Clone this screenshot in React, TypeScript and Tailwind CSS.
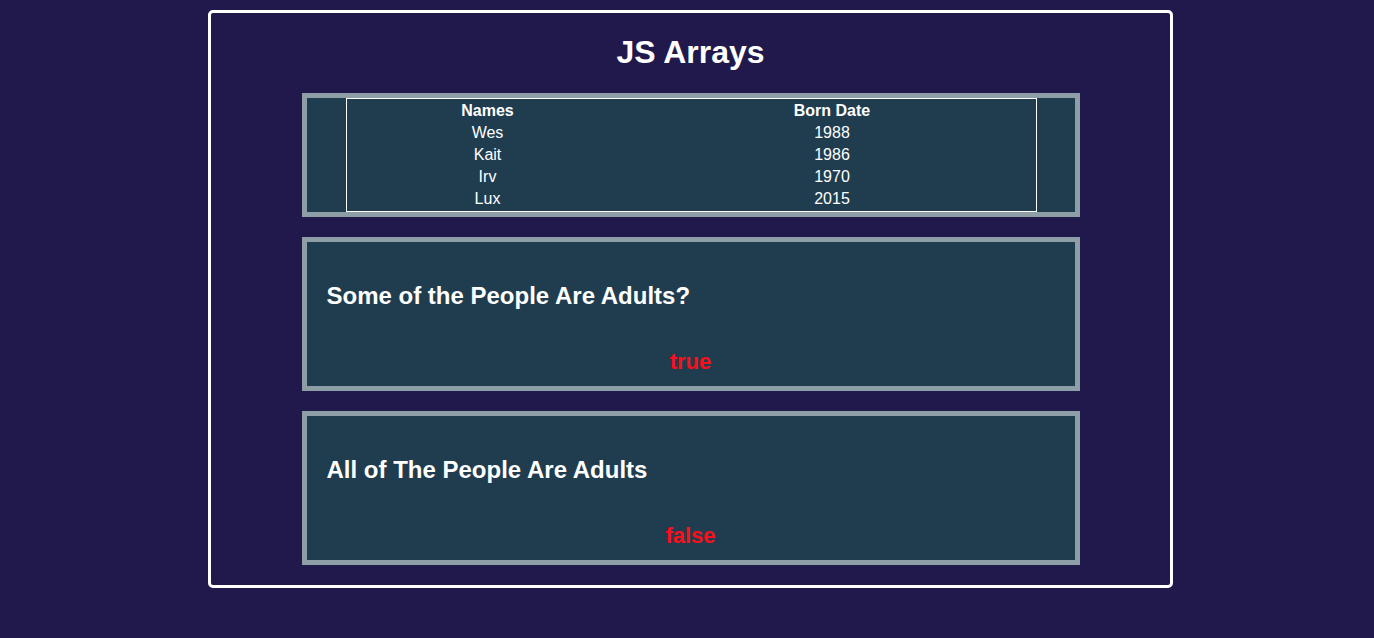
import React from "react";

const people = [
  { name: "Wes", year: 1988 },
  { name: "Kait", year: 1986 },
  { name: "Irv", year: 1970 },
  { name: "Lux", year: 2015 },
];

function Panel({ title, value }: { title: string; value: string }) {
  return (
    <div className="w-[778px] mx-auto border-[5px] border-[#8d9ea7] bg-[#203d4f] pt-[40px] pb-[11px] px-[20px]">
      <h2 className="text-[24px] leading-[28px] font-bold text-white">{title}</h2>
      <p className="mt-[39px] text-[22px] leading-[26px] font-bold text-[#f8101c] text-center">{value}</p>
    </div>
  );
}

export default function App() {
  return (
    <div
      className="min-h-[638px] w-full bg-[#21194b] pt-[10px] overflow-hidden"
      style={{ fontFamily: '"Liberation Sans", Arial, sans-serif' }}
    >
      <div className="ml-[208px] w-[965px] h-[578px] border-[3px] border-white rounded-[5px] px-0 pb-[20px]">
        <h1 className="mt-[21px] mb-[22px] text-center text-[32px] leading-[37px] font-bold text-white">
          JS Arrays
        </h1>
        <div className="w-[778px] mx-auto border-[5px] border-[#8d9ea7] bg-[#203d4f]">
          <div className="w-[691px] ml-[39px] border border-white pt-[1px] pb-[1px] text-white text-[16px]">
            <div className="grid grid-cols-[282px_1fr] h-[22px] leading-[22px] font-bold text-center">
              <div>Names</div>
              <div>Born Date</div>
            </div>
            {people.map((p) => (
              <div key={p.name} className="grid grid-cols-[282px_1fr] h-[22px] leading-[22px] text-center">
                <div>{p.name}</div>
                <div>{p.year}</div>
              </div>
            ))}
          </div>
        </div>
        <div className="h-[20px]" />
        <Panel title="Some of the People Are Adults?" value="true" />
        <div className="h-[20px]" />
        <Panel title="All of The People Are Adults" value="false" />
      </div>
    </div>
  );
}
